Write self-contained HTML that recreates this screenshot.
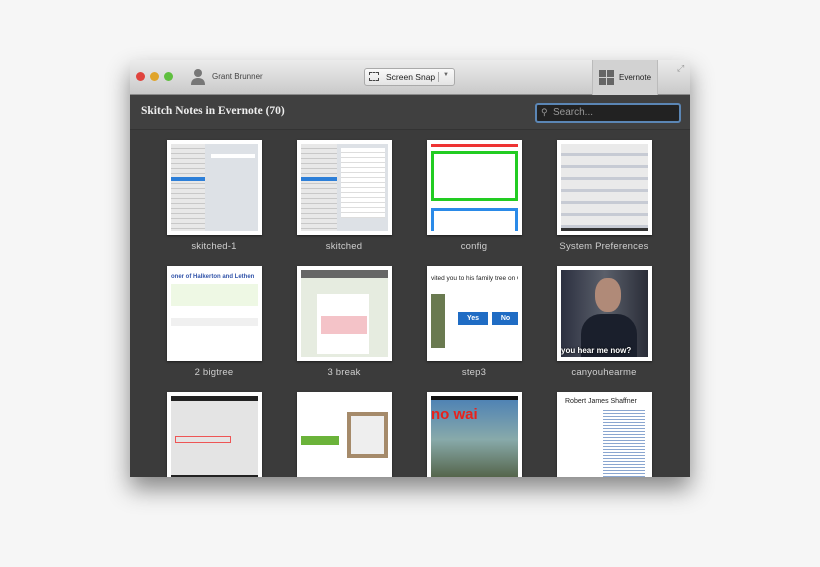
<!DOCTYPE html><html><head><style>
*{margin:0;padding:0;box-sizing:border-box}
body{width:820px;height:567px;background:#f6f6f6;position:relative;overflow:hidden;font-family:"Liberation Sans",sans-serif}
.win{position:absolute;left:130px;top:60px;width:560px;height:417px;background:#3b3b3b;box-shadow:0 12px 22px rgba(0,0,0,.45);overflow:hidden}
.tb{position:absolute;left:0;top:0;width:560px;height:35px;background:linear-gradient(#ececec,#c9c9c9);border-bottom:1px solid #8a8a8a}
.dot{position:absolute;top:12px;width:9px;height:9px;border-radius:50%}
.hdr{position:absolute;left:0;top:35px;width:560px;height:35px;background:#404040;border-bottom:1px solid #333}
.t{position:absolute;width:95px;height:95px;background:#fff;padding:4px;box-shadow:0 1px 2px rgba(0,0,0,.5)}
.t>div{width:100%;height:100%;position:relative;overflow:hidden}
.lb{position:absolute;width:130px;text-align:center;color:#cfcfcf;font-size:9.5px;letter-spacing:.2px}
</style></head><body>
<div class="win">
<div class="tb">
<div class="dot" style="left:6px;background:#e0443e"></div>
<div class="dot" style="left:20px;background:#e0a42a"></div>
<div class="dot" style="left:34px;background:#5fbf3f"></div>
<svg style="position:absolute;left:60px;top:8px" width="16" height="18"><circle cx="8" cy="5" r="4" fill="#777"/><path d="M1 17 Q1 10 8 10 Q15 10 15 17Z" fill="#777"/></svg>
<div style="position:absolute;left:82px;top:12px;font-size:8px;color:#444">Grant Brunner</div>
<div style="position:absolute;left:234px;top:8px;width:91px;height:18px;background:linear-gradient(#fafafa,#e4e4e4);border:1px solid #aaa;border-radius:3px;font-size:8.5px;color:#222">
<div style="position:absolute;left:4px;top:3px;width:10px;height:9px;border:1px dashed #444"></div>
<span style="position:absolute;left:21px;top:3px">Screen Snap</span>
<div style="position:absolute;left:73px;top:3px;width:1px;height:10px;background:#aaa"></div>
<span style="position:absolute;left:78px;top:3px;font-size:6px;color:#666">▼</span></div>
<div style="position:absolute;left:462px;top:0;width:66px;height:35px;background:#d2d2d2;border-left:1px solid #bbb;border-right:1px solid #bbb">
<svg style="position:absolute;left:6px;top:10px" width="16" height="15"><rect x="0" y="0" width="7" height="7" fill="#666"/><rect x="8" y="0" width="7" height="7" fill="#666"/><rect x="0" y="8" width="7" height="7" fill="#666"/><rect x="8" y="8" width="7" height="7" fill="#666"/></svg>
<span style="position:absolute;left:26px;top:13px;font-size:8px;color:#222">Evernote</span></div>
<div style="position:absolute;left:547px;top:3px;font-size:9px;color:#999">⤢</div>
</div>
<div class="hdr">
<div style="position:absolute;left:11px;top:10px;font-family:'Liberation Serif',serif;font-weight:bold;font-size:11.5px;color:#eee">Skitch Notes in Evernote (70)</div>
<div style="position:absolute;left:405px;top:8px;width:146px;height:20px;background:#222;border:2px solid #5b86b5;border-radius:3px;color:#999;font-size:10px;padding:2px 0 0 16px">Search...<span style="position:absolute;left:4px;top:2px;font-size:9px">⚲</span></div>
</div>
<!-- row 1 -->
<div class="t" style="left:37px;top:80px"><div style="background:#dde1e6"><div style="position:absolute;left:0;top:0;width:34px;height:100%;background:repeating-linear-gradient(#e8e8e8 0 4px,#c8c8c8 4px 5px)"></div><div style="position:absolute;left:0;top:33px;width:34px;height:4px;background:#2d7fd8"></div><div style="position:absolute;left:40px;top:10px;width:44px;height:4px;background:#fff"></div></div></div>
<div class="t" style="left:167px;top:80px"><div style="background:#dde1e6"><div style="position:absolute;left:0;top:0;width:36px;height:100%;background:repeating-linear-gradient(#e8e8e8 0 4px,#c8c8c8 4px 5px)"></div><div style="position:absolute;left:0;top:33px;width:36px;height:4px;background:#2d7fd8"></div><div style="position:absolute;left:40px;top:4px;width:44px;height:70px;background:repeating-linear-gradient(#fff 0 4px,#ddd 4px 5px)"></div></div></div>
<div class="t" style="left:297px;top:80px"><div style="background:#fff"><div style="position:absolute;left:0;top:0;width:100%;height:3px;background:#e33"></div><div style="position:absolute;left:0;top:7px;width:87px;height:50px;border:3px solid #2c2"></div><div style="position:absolute;left:0;top:64px;width:87px;height:30px;border:3px solid #2a8ae8"></div></div></div>
<div class="t" style="left:427px;top:80px"><div style="background:repeating-linear-gradient(#eaeaea 0 9px,#c7cbd4 9px 12px)"><div style="position:absolute;left:0;bottom:0;width:100%;height:3px;background:#333"></div></div></div>
<div class="lb" style="left:19px;top:181px">skitched-1</div>
<div class="lb" style="left:149px;top:181px">skitched</div>
<div class="lb" style="left:279px;top:181px">config</div>
<div class="lb" style="left:409px;top:181px">System Preferences</div>
<!-- row 2 -->
<div class="t" style="left:37px;top:206px"><div style="background:#fff"><div style="position:absolute;left:0;top:4px;font-size:6px;color:#35a;font-weight:bold;white-space:nowrap">oner of Halkerton and Lethen</div><div style="position:absolute;left:0;top:14px;width:100%;height:22px;background:#eef8e4"></div><div style="position:absolute;left:0;top:48px;width:100%;height:8px;background:#f0f0f0"></div></div></div>
<div class="t" style="left:167px;top:206px"><div style="background:#e6ece0"><div style="position:absolute;left:0;top:0;width:100%;height:8px;background:#666"></div><div style="position:absolute;left:16px;top:24px;width:52px;height:60px;background:#fff"></div><div style="position:absolute;left:20px;top:46px;width:46px;height:18px;background:#f4c3c8"></div></div></div>
<div class="t" style="left:297px;top:206px"><div style="background:#fff"><div style="position:absolute;left:0;top:5px;font-size:6.5px;white-space:nowrap;color:#222">vited you to his family tree on G</div><div style="position:absolute;left:0;top:24px;width:14px;height:54px;background:#6a7a50"></div><div style="position:absolute;left:27px;top:42px;width:30px;height:13px;background:#1f6cc4;color:#fff;font-size:7px;font-weight:bold;text-align:center;line-height:13px">Yes</div><div style="position:absolute;left:61px;top:42px;width:27px;height:13px;background:#1f6cc4;color:#fff;font-size:7px;font-weight:bold;text-align:center;line-height:13px">No</div></div></div>
<div class="t" style="left:427px;top:206px"><div style="background:linear-gradient(90deg,#2c3040,#5a5f6a 50%,#2a2d38)"><div style="position:absolute;left:34px;top:8px;width:26px;height:34px;border-radius:45%;background:#b08a78"></div><div style="position:absolute;left:20px;top:44px;width:56px;height:50px;background:#1a1f2c;border-radius:20px 20px 0 0"></div><div style="position:absolute;left:0;bottom:2px;width:100%;font-size:8px;color:#fff;font-weight:bold;text-shadow:0 0 2px #000">you hear me now?</div></div></div>
<div class="lb" style="left:19px;top:307px">2 bigtree</div>
<div class="lb" style="left:149px;top:307px">3 break</div>
<div class="lb" style="left:279px;top:307px">step3</div>
<div class="lb" style="left:409px;top:307px">canyouhearme</div>
<!-- row 3 -->
<div class="t" style="left:37px;top:332px"><div style="background:#e4e4e4"><div style="position:absolute;left:0;top:0;width:100%;height:5px;background:#222"></div><div style="position:absolute;left:0;bottom:0;width:100%;height:8px;background:#222"></div><div style="position:absolute;left:4px;top:40px;width:56px;height:7px;border:1px solid #e55"></div></div></div>
<div class="t" style="left:167px;top:332px"><div style="background:#fff"><div style="position:absolute;left:0;top:40px;width:38px;height:9px;background:#6bb33a"></div><div style="position:absolute;left:46px;top:16px;width:41px;height:46px;background:#a58a6a"></div><div style="position:absolute;left:50px;top:20px;width:33px;height:38px;background:#eee"></div></div></div>
<div class="t" style="left:297px;top:332px"><div style="background:linear-gradient(#4a7fb5,#8aa 50%,#4d5a3c)"><div style="position:absolute;left:0;top:0;width:100%;height:4px;background:#111"></div><div style="position:absolute;left:0;top:10px;font-size:15px;font-weight:bold;color:#e8221c;white-space:nowrap">no wai</div></div></div>
<div class="t" style="left:427px;top:332px"><div style="background:#fff"><div style="position:absolute;left:4px;top:2px;font-size:7px;color:#222;white-space:nowrap">Robert James Shaffner</div><div style="position:absolute;left:42px;top:12px;width:42px;height:70px;background:repeating-linear-gradient(#fff 0 2px,#8aa6d0 2px 3px)"></div></div></div>
</div>
</body></html>
